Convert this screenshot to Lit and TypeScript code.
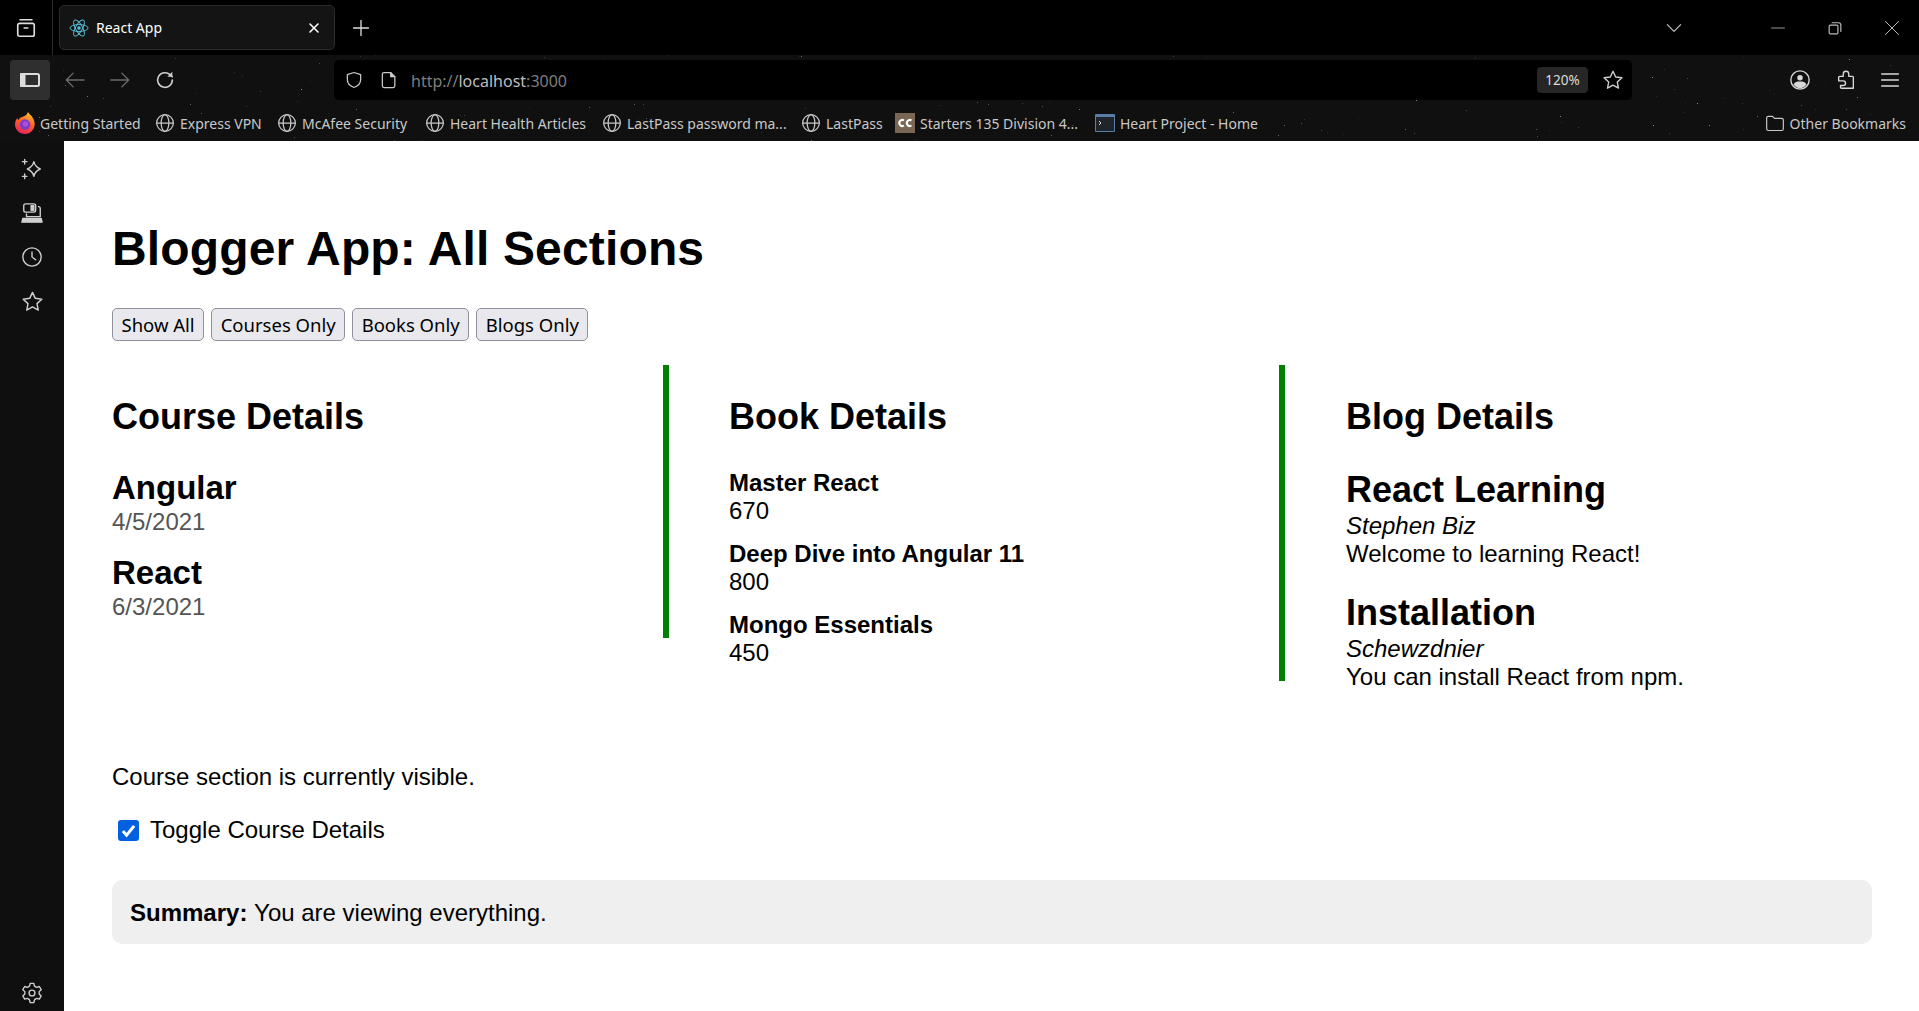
import { LitElement, html, css, svg } from 'lit';
import { customElement } from 'lit/decorators.js';

const ico = (size: number, body: unknown, sw = 1.5) => html`<svg
  width=${size}
  height=${size}
  viewBox="0 0 24 24"
  fill="none"
  stroke="currentColor"
  stroke-width=${sw}
  stroke-linecap="round"
  stroke-linejoin="round"
>${body}</svg>`;

const globe = () =>
  ico(
    20,
    svg`<circle cx="12" cy="12" r="10"/><ellipse cx="12" cy="12" rx="4.6" ry="10"/><path d="M2 12h20"/>`,
    1.5,
  );

const firefox = html`<svg width="20" height="22" viewBox="0 0 20 22">
  <defs>
    <linearGradient id="ff" x1="0.7" y1="0" x2="0.3" y2="1">
      <stop offset="0" stop-color="#ffc51f" />
      <stop offset="0.5" stop-color="#ff5a2c" />
      <stop offset="1" stop-color="#e8215f" />
    </linearGradient>
  </defs>
  <path d="M13 0c1 2 3.500 3.500 4.500 5.500 2 3 2.500 6 2 8.500-1 4.500-5 8-9.500 8-5.500 0-10-4.200-10-9.500 0-2.500 .8-5 2.500-6.500 0 1 .5 1.700 1 2 1-2.500 3-3 5-3.500 2-.6 3.800-2.200 4.500-4.500z" fill="url(#ff)" />
  <circle cx="10" cy="12.500" r="5.200" fill="#7b3bc9" />
  <circle cx="10.500" cy="12" r="2.800" fill="#b14be0" />
</svg>`;

const cc = html`<svg width="20" height="20" viewBox="0 0 20 20"><rect width="20" height="20" fill="#7a6654" /><path d="M9 7.500a3 3 0 1 0 0 5M16.500 7.500a3 3 0 1 0 0 5" fill="none" stroke="#fff" stroke-width="2" /></svg>`;

const term = html`<svg width="20" height="20" viewBox="0 0 20 20"><rect y="1" width="20" height="18" rx="1" fill="#5a7da8" /><rect x="1" y="4" width="18" height="14" fill="#20242b" /><path d="M4 8l2 2-2 2" fill="none" stroke="#ddd" stroke-width="1" /></svg>`;

const folder = ico(
  20,
  svg`<path d="M2 6a2 2 0 0 1 2-2h5l2.500 2.500H20a2 2 0 0 1 2 2V19a2 2 0 0 1-2 2H4a2 2 0 0 1-2-2z"/>`,
  1.4,
);

const marks = [
  { icon: firefox, label: 'Getting Started', w: 140 },
  { icon: globe(), label: 'Express VPN', w: 122 },
  { icon: globe(), label: 'McAfee Security', w: 148 },
  { icon: globe(), label: 'Heart Health Articles', w: 177 },
  { icon: globe(), label: 'LastPass password ma...', w: 199 },
  { icon: globe(), label: 'LastPass', w: 94 },
  { icon: cc, label: 'Starters 135 Division 4...', w: 200 },
  { icon: term, label: 'Heart Project - Home', w: 170 },
];

// scattered specks on the dark theme background
function stars() {
  let s = 7;
  const r = () => (s = (s * 16807) % 2147483647) / 2147483647;
  const out = [];
  for (let i = 0; i < 260; i++) {
    const y = r() * 141;
    out.push(
      svg`<rect x=${Math.round(r() * 1919)} y=${Math.round(y)} width="1" height="1" fill="#fff" opacity=${(0.08 + r() * r() * 0.5).toFixed(2)} />`,
    );
  }
  return out;
}

@customElement('app-root')
export class AppRoot extends LitElement {
  static styles = css`
    :host {
      display: block;
      height: 1011px;
      overflow: hidden;
      background: #fff;
      font-family: 'Liberation Sans', Arial, sans-serif;
      color: #000;
    }
    .chrome {
      position: relative;
      height: 141px;
      background: #101010;
      color: #d6d6d6;
      font-family: 'Noto Sans', 'Open Sans', sans-serif;
    }
    .stars {
      position: absolute;
      inset: 0;
      pointer-events: none;
    }
    .titlebar,
    .toolbar,
    .bookmarks {
      position: relative;
      display: flex;
      align-items: center;
    }
    .titlebar {
      height: 55px;
      background: #000;
    }
    .tabs-btn {
      width: 53px;
      height: 55px;
      display: flex;
      align-items: center;
      justify-content: center;
      border-right: 1px solid #2a2a2a;
      box-sizing: border-box;
      color: #ddd;
    }
    .tab {
      margin-left: 6px;
      width: 276px;
      height: 45px;
      box-sizing: border-box;
      background: #141414;
      border: 1px solid #2b2b2b;
      border-radius: 5px;
      display: flex;
      align-items: center;
      padding: 0 12px 0 9px;
      color: #fff;
      font-size: 14px;
    }
    .tab .fav {
      width: 20px;
      height: 20px;
      margin-right: 7px;
      display: flex;
    }
    .tab .name {
      flex: 1;
    }
    .plus {
      margin-left: 16px;
      display: flex;
      color: #ddd;
    }
    .spacer {
      flex: 1;
    }
    .winctl {
      display: flex;
      align-items: center;
      color: #bbb;
    }
    .winctl .chev {
      margin-right: 65px;
      display: flex;
    }
    .winctl .w {
      width: 57px;
      display: flex;
      justify-content: center;
    }
    .winctl .w:last-child {
      width: 54px;
      margin-left: 2px;
    }
    .toolbar {
      height: 45px;
      padding: 5px 0 0 10px;
      box-sizing: border-box;
      color: #cfcfcf;
    }
    .side-btn {
      width: 40px;
      height: 40px;
      margin-right: 2px;
      background: #2f2f2f;
      border-radius: 4px;
      display: flex;
      align-items: center;
      justify-content: center;
      color: #dcdcdc;
    }
    .nav {
      width: 45px;
      display: flex;
      justify-content: center;
    }
    .nav.off {
      color: #6b6b6b;
    }
    .url {
      width: 1298px;
      height: 40px;
      margin-left: 147px;
      background: #000;
      border-radius: 5px;
      display: flex;
      align-items: center;
      padding: 0 8px 0 10px;
      box-sizing: border-box;
      font-size: 16px;
    }
    .url .i {
      width: 20px;
      display: flex;
      margin-right: 15px;
      justify-content: center;
      color: #c9c9c9;
    }
    .url .i + .i {
      margin-right: 12px;
    }
    .addr {
      padding-top: 2px;
    }
    .dim {
      color: #7d7d7d;
    }
    .host {
      color: #bdbdbd;
    }
    .zoom {
      width: 51px;
      height: 26px;
      background: #262626;
      border-radius: 4px;
      font-size: 13.5px;
      display: flex;
      align-items: center;
      justify-content: center;
      color: #ddd;
      margin-right: 14px;
    }
    .tool-r {
      display: flex;
      margin-left: auto;
      padding-right: 18px;
      gap: 22px;
      color: #d8d8d8;
    }
    .tool-r svg:first-child {
      margin-right: 2px;
    }
    .bookmarks {
      height: 41px;
      box-sizing: border-box;
      padding: 5px 0 0 15px;
      font-size: 14px;
      color: #c8c8c8;
    }
    .mark {
      display: flex;
      align-items: center;
      gap: 5px;
      white-space: nowrap;
      flex: none;
    }
    .mark svg {
      flex: none;
    }
    .mark.other {
      margin-left: auto;
      padding-right: 13px;
    }
    .body {
      display: flex;
      height: 870px;
    }
    aside {
      width: 64px;
      flex: none;
      background: #0f0f0f;
      color: #cfcfcf;
      display: flex;
      flex-direction: column;
      align-items: center;
      padding: 17px 0 7px;
      box-sizing: border-box;
      gap: 22px;
    }
    aside .bottom {
      margin-top: auto;
    }
    aside div {
      height: 22px;
      display: flex;
    }
    main {
      flex: 1;
      min-width: 0;
      padding: 80px 47px 0 48px;
    }
    h1 {
      font-size: 48px;
      line-height: 55px;
      letter-spacing: 0.15px;
      margin: 0 0 32px;
      font-weight: 700;
    }
    .filters {
      display: flex;
      gap: 7px;
      margin-bottom: 24px;
    }
    button {
      font: 18.5px / 23px 'Noto Sans', 'Open Sans', sans-serif;
      height: 33px;
      padding: 0 8.5px;
      background: #e9e9ed;
      border: 1px solid #8f8f9d;
      border-radius: 5px;
      color: #000;
    }
    .cols {
      display: grid;
      grid-template-columns: 557px 557px 1fr;
      column-gap: 60px;
      align-items: start;
    }
    .col {
      box-sizing: border-box;
      padding-top: 31px;
    }
    .col.ruled {
      border-right: 6px solid #008000;
    }
    .c1 {
      padding-bottom: 17px;
    }
    .c2 {
      padding-bottom: 14px;
      margin-right: 1px;
    }
    h2 {
      font-size: 36px;
      line-height: 41px;
      margin: 0 0 32px;
      font-weight: 700;
    }
    .c1 h2 {
      margin-bottom: 35px;
    }
    .date {
      font-size: 24px;
      line-height: 28px;
      color: #555;
    }
    .course + .course {
      margin-top: 21px;
    }
    .course h3 {
      line-height: 32px;
      font-size: 33px;
      margin: 0 0 4px;
    }
    .book {
      font-size: 24px;
      line-height: 28px;
      margin-bottom: 15px;
    }
    .book:last-child {
      margin-bottom: 0;
    }
    .book b {
      display: block;
    }
    .blog {
      font-size: 24px;
      line-height: 28px;
      margin-bottom: 24px;
    }
    .blog h4 {
      font-size: 36px;
      line-height: 41px;
      margin: 0 0 2px;
    }
    .blog i {
      display: block;
    }
    .status {
      font-size: 24px;
      line-height: 28px;
      margin: 48px 0 0;
    }
    label {
      display: flex;
      align-items: center;
      font-size: 24px;
      line-height: 28px;
      margin: 25px 0 36px;
    }
    .box {
      width: 21px;
      height: 21px;
      margin: 0 11px 0 6px;
      background: #0060df;
      border-radius: 3px;
      display: flex;
      align-items: center;
      justify-content: center;
    }
    .summary {
      background: #efefef;
      border-radius: 10px;
      height: 64px;
      box-sizing: border-box;
      padding: 1px 18px 0;
      display: flex;
      align-items: center;
      font-size: 24px;
      gap: 0.28em;
    }
  `;

  render() {
    return html`
      <div class="chrome">
        <svg class="stars" width="1919" height="141">${stars()}</svg>
        <div class="titlebar">
          <div class="tabs-btn">
            ${ico(
              22,
              svg`<rect x="3" y="7" width="18" height="14" rx="2"/><path d="M5.500 3h13M10 12h4" />`,
              1.8,
            )}
          </div>
          <div class="tab">
            <span class="fav">
              <svg width="20" height="20" viewBox="-11 -11 22 22" fill="none" stroke="#58c4dc" stroke-width="1">
                <circle r="2" fill="#58c4dc" stroke="none" />
                <ellipse rx="10" ry="3.800" />
                <ellipse rx="10" ry="3.800" transform="rotate(60)" />
                <ellipse rx="10" ry="3.800" transform="rotate(120)" />
              </svg>
            </span>
            <span class="name">React App</span>
            ${ico(16, svg`<path d="M6 6l12 12M18 6L6 18"/>`, 2.4)}
          </div>
          <span class="plus">${ico(20, svg`<path d="M12 3v18M3 12h18"/>`, 1.6)}</span>
          <span class="spacer"></span>
          <div class="winctl">
            <span class="chev">${ico(20, svg`<path d="M4 8l8 8 8-8"/>`, 1.5)}</span>
            <span class="w">${ico(14, svg`<path d="M1 12h22"/>`, 1.4)}</span>
            <span class="w">${ico(
              14,
              svg`<rect x="2" y="7" width="15" height="15" rx="2"/><path d="M7 3h11a4 4 0 0 1 4 4v11"/>`,
              2,
            )}</span>
            <span class="w">${ico(16, svg`<path d="M2 2l20 20M22 2L2 22"/>`, 1.5)}</span>
          </div>
        </div>
        <div class="toolbar">
          <div class="side-btn">
            ${ico(24, svg`<rect x="3" y="6" width="18" height="12" rx="1.500"/><rect x="3" y="6" width="3.500" height="12" fill="currentColor"/>`, 2)}
          </div>
          <span class="nav off">${ico(22, svg`<path d="M22 12H2.500M10 4.500L2.500 12l7.500 7.500"/>`)}</span>
          <span class="nav off">${ico(22, svg`<path d="M2 12h19.500M14 4.500l7.500 7.500-7.500 7.500"/>`)}</span>
          <span class="nav">${ico(
            22,
            svg`<path d="M20 12a8 8 0 1 1-2.500-5.800L20 8.500"/><path d="M20 3v5.500h-5.500" fill="currentColor" stroke="none"/>`,
            1.7,
          )}</span>
          <div class="url">
            <span class="i">${ico(22, svg`<path d="M12 3l8 2.500v6c0 5-3.500 8-8 9.500-4.500-1.500-8-4.500-8-9.500v-6z"/>`)}</span>
            <span class="i">${ico(20, svg`<path d="M6 3h8l5 5v11a2 2 0 0 1-2 2H6a2 2 0 0 1-2-2V5a2 2 0 0 1 2-2z"/><path d="M14 3v5h5" fill="currentColor"/>`)}</span>
            <span class="addr"><span class="dim">http://</span><span class="host">localhost</span><span class="dim">:3000</span></span>
            <span class="spacer"></span>
            <span class="zoom">120%</span>
            ${ico(22, svg`<path d="M12 2.500l2.900 6.200 6.800.9-5 4.600 1.300 6.700-6-3.300-6 3.300 1.300-6.700-5-4.600 6.800-.9z"/>`)}
          </div>
          <div class="tool-r">
            ${ico(
              22,
              svg`<circle cx="12" cy="12" r="10"/><circle cx="12" cy="9.500" r="3" fill="currentColor" stroke="none"/><path d="M5 17c1-3 4-3.500 7-3.500s6 .5 7 3.500c-2 3-4.500 4-7 4s-5-1-7-4z" fill="currentColor" stroke="none"/>`,
            )}
            ${ico(
              22,
              svg`<path d="M9 5.500a3 3 0 1 1 6 0V8h4a1 1 0 0 1 1 1v12h-13a1 1 0 0 1-1-1v-2h3a2.500 2.500 0 0 0 0-5H4v-4a1 1 0 0 1 1-1h4z"/>`,
            )}
            ${ico(22, svg`<path d="M3 5.500h18M3 12h18M3 18.500h18"/>`, 1.8)}
          </div>
        </div>
        <div class="bookmarks">
          ${marks.map(
            (m) => html`<span class="mark" style="width:${m.w}px">${m.icon}${m.label}</span>`,
          )}
          <span class="mark other">${folder}Other Bookmarks</span>
        </div>
      </div>
      <div class="body">
        <aside>
          <div>
            ${ico(
              22,
              svg`<path d="M14 4c.8 4 2.500 6 7 8-4.500 2-6.200 4-7 8-.8-4-2.500-6-7-8 4.500-2 6.200-4 7-8z"/><path d="M4 1.500v5M1.500 4h5M4 17.500v5M1.500 20h5"/>`,
            )}
          </div>
          <div>
            ${ico(
              22,
              svg`<rect x="3" y="2" width="13" height="9" rx="2"/><rect x="11" y="4" width="3" height="5" fill="currentColor"/><path d="M19 5c1.500 0 2 1 2 2v9H6v-3"/><path d="M2 18h20l1 4H1z" fill="currentColor"/>`,
            )}
          </div>
          <div>${ico(22, svg`<circle cx="12" cy="12" r="10"/><path d="M12 6.500V12l4 3"/>`)}</div>
          <div>
            ${ico(23, svg`<path d="M12 2.500l2.900 6.200 6.800.9-5 4.600 1.300 6.700-6-3.300-6 3.300 1.300-6.700-5-4.600 6.800-.9z"/>`)}
          </div>
          <div class="bottom">
            ${ico(
              22,
              svg`<circle cx="12" cy="12" r="3.200"/><path d="M10 2h4l.7 3 2.300 1.300 3-.9 2 3.500-2.200 2.100v2.600L22 15.700l-2 3.500-3-.9L14.700 20l-.7 3h-4l-.7-3L7 18.300l-3 .9-2-3.500 2.200-2.100v-2.600L2 8.900l2-3.500 3 .9L9.300 5z" transform="translate(0 -.500)"/>`,
            )}
          </div>
        </aside>
        <main>
          <h1>Blogger App: All Sections</h1>
          <div class="filters">
            <button>Show All</button>
            <button>Courses Only</button>
            <button>Books Only</button>
            <button>Blogs Only</button>
          </div>
          <section class="cols">
            <div class="col ruled c1">
              <h2>Course Details</h2>
              <div class="course"><h3>Angular</h3><div class="date">4/5/2021</div></div>
              <div class="course"><h3>React</h3><div class="date">6/3/2021</div></div>
            </div>
            <div class="col ruled c2">
              <h2>Book Details</h2>
              <div class="book"><b>Master React</b>670</div>
              <div class="book"><b>Deep Dive into Angular 11</b>800</div>
              <div class="book"><b>Mongo Essentials</b>450</div>
            </div>
            <div class="col">
              <h2>Blog Details</h2>
              <div class="blog">
                <h4>React Learning</h4>
                <i>Stephen Biz</i>Welcome to learning React!
              </div>
              <div class="blog">
                <h4>Installation</h4>
                <i>Schewzdnier</i>You can install React from npm.
              </div>
            </div>
          </section>
          <p class="status">Course section is currently visible.</p>
          <label>
            <span class="box">
              <svg width="15" height="15" viewBox="0 0 16 16" fill="none" stroke="#fff" stroke-width="3.200"><path d="M2 8.500l4 4.500 8-10" /></svg>
            </span>
            Toggle Course Details
          </label>
          <div class="summary"><b>Summary:</b><span>You are viewing everything.</span></div>
        </main>
      </div>
    `;
  }
}
